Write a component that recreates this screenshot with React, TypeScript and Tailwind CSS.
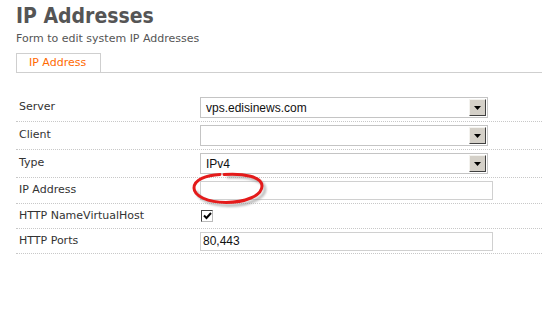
import React from "react";

function DropBtn() {
  return (
    <div className="w-[17px] h-[17px] bg-[#d4d0c8] border border-t-[#f4f3ef] border-l-[#f4f3ef] border-r-[#404040] border-b-[#404040] flex items-center justify-center">
      <svg width="7" height="4" viewBox="0 0 7 4">
        <polygon points="0,0 7,0 3.5,4" fill="#000" />
      </svg>
    </div>
  );
}

function Select({ value }: { value: string }) {
  return (
    <div className="w-[288px] h-[21px] border border-[#c4c4c4] flex items-center justify-between pl-[5px] pr-[1px] bg-white">
      <span className="text-[12px] leading-[14px] text-[#111] font-['Liberation_Sans',Arial,sans-serif]">{value}</span>
      <DropBtn />
    </div>
  );
}

function TextInput({ value }: { value: string }) {
  return (
    <div className="w-[293px] h-[19px] border border-[#d0d0d0] flex items-center pl-[2px] bg-white">
      <span className="text-[12px] leading-[14px] text-[#111] font-['Liberation_Sans',Arial,sans-serif]">{value}</span>
    </div>
  );
}

function Checkbox() {
  return (
    <div className="ml-[1px] w-[12px] h-[12px] border border-t-[#444] border-l-[#444] border-r-[#bbb] border-b-[#bbb] bg-white flex items-center justify-center">
      <svg width="9" height="8" viewBox="0 0 9 8">
        <path d="M1 3.5 L3.5 6 L8 1" stroke="#000" strokeWidth="2" fill="none" />
      </svg>
    </div>
  );
}

function Row({ label, h, children }: { label: string; h: string; children?: React.ReactNode }) {
  return (
    <div className={`flex items-center border-b border-dotted border-[#c8c8c8] ${h}`}>
      <div className="w-[184px] pl-[3px] text-[11px] text-[#333]">{label}</div>
      <div className="flex items-center">{children}</div>
    </div>
  );
}

export default function App() {
  return (
    <div className="relative w-[542px] h-[313px] bg-white overflow-hidden font-['DejaVu_Sans',sans-serif]">
      <div className="pl-4 pt-[3px]">
        <h1 className="text-[21px] leading-[26px] font-bold text-[#555] font-['DejaVu_Sans_Condensed','DejaVu_Sans',sans-serif]">
          IP Addresses
        </h1>
        <p className="mt-[3px] text-[11px] leading-[13px] text-[#555]">Form to edit system IP Addresses</p>
        <div className="mt-[8px] flex border-b border-[#cfcfcf]">
          <div className="w-[85px] h-[19px] border border-b-0 border-[#cfcfcf] pl-[12px] pt-[2px] text-[11px] leading-[13px] text-[#ff6a00]">
            IP Address
          </div>
        </div>
        <div className="mt-[21px]">
          <Row label="Server" h="h-[28px]">
            <Select value="vps.edisinews.com" />
          </Row>
          <Row label="Client" h="h-[28px]">
            <Select value="" />
          </Row>
          <Row label="Type" h="h-[28px]">
            <Select value="IPv4" />
          </Row>
          <Row label="IP Address" h="h-[26px]">
            <TextInput value="" />
          </Row>
          <Row label="HTTP NameVirtualHost" h="h-[25px]">
            <Checkbox />
          </Row>
          <Row label="HTTP Ports" h="h-[25px]">
            <TextInput value="80,443" />
          </Row>
        </div>
      </div>
      <svg className="absolute left-[186px] top-[168px]" width="90" height="44" viewBox="0 0 90 44">
        <defs>
          <filter id="blur" x="-20%" y="-30%" width="140%" height="160%">
            <feGaussianBlur stdDeviation="1.3" />
          </filter>
        </defs>
        <path
          d="M41 9 C61 8 79 12 79 21 C79 31 61 37.5 43 37.5 C25 37.5 11 31 11 23"
          fill="none"
          stroke="#888"
          strokeWidth="3"
          opacity="0.55"
          filter="url(#blur)"
        />
        <path
          d="M38 6.5 C58 5 76 9 76 18 C76 28 58 34.5 40 34.5 C22 34.5 8 28 8 20 C8 12 20 7 34 6.5"
          fill="none"
          stroke="#e41b1b"
          strokeWidth="3"
          strokeLinecap="round"
        />
      </svg>
    </div>
  );
}
